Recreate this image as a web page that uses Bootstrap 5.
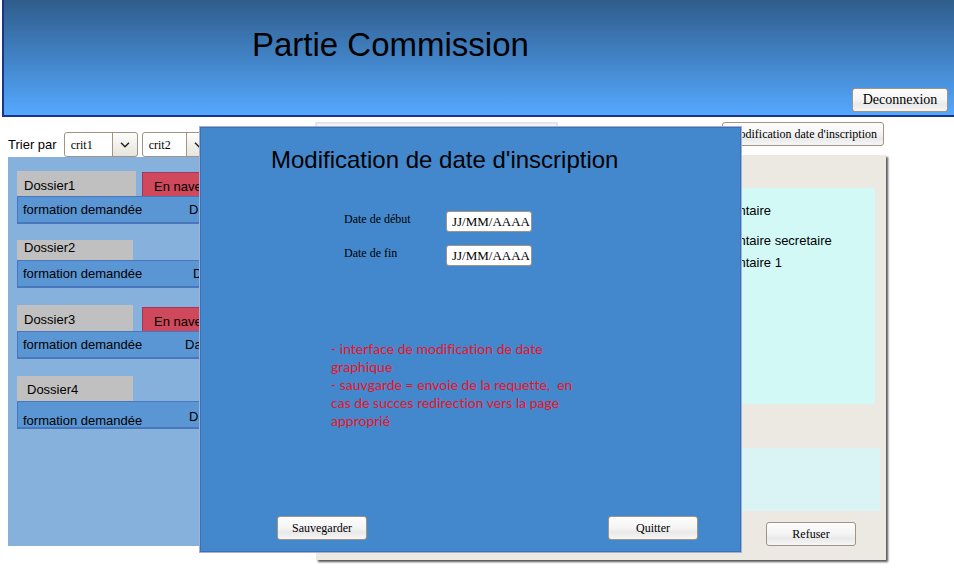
<!DOCTYPE html>
<html lang="fr">
<head>
<meta charset="utf-8">
<meta name="viewport" content="width=device-width, initial-scale=1">
<title>Partie Commission</title>
<link href="https://cdn.jsdelivr.net/npm/bootstrap@5.3.0/dist/css/bootstrap.min.css" rel="stylesheet">
<style>
  body { font: 13px/18px "Liberation Sans", Arial, sans-serif; color: #000; background: #fff; }
  .top-banner { height: 117px; margin-left: 2px; padding: 0 6px 3px 248px; background: linear-gradient(#2f5d8c, #54a8ff); border-left: 2px solid #1a3487; border-bottom: 2px solid #1a3487; }
  .top-banner h1 { font-size: 33px; line-height: 40px; padding-top: 25px; }
  .soft-btn { height: 24px; min-width: 90px; padding: 0 6px; font: 12px/20px "Liberation Serif", "Times New Roman", serif; color: #000; background: linear-gradient(#fdfdfd, #f4f4f4 50%, #e9e9e9 70%, #f6f6f6); border: 1px solid #a09482; border-radius: 3px; }
  .soft-btn.logout { font-size: 14px; min-width: 96px; }
  .soft-btn.dates { min-width: 162px; }
  .side { flex: 0 0 308px; padding: 15px 0 0 8px; }
  .sort-select { width: 74px; height: 25px; padding: 0 24px 0 6px; font: 12px/20px "Liberation Serif", serif; color: #000; border: 1px solid #a09482; border-radius: 3px;
    background: url("data:image/svg+xml,%3Csvg xmlns='http://www.w3.org/2000/svg' width='10' height='6'%3E%3Cpath d='M1 .8 5 4.8 9 .8' fill='none' stroke='%23222' stroke-width='1.5'/%3E%3C/svg%3E") no-repeat right 7px center / 10px 6px,
      linear-gradient(#a09482, #a09482) no-repeat right 24px top / 1px 100%,
      linear-gradient(#fdfdfc, #e6e4dc) no-repeat right top / 24px 100%, #fff; }
  .sort-select.second { width: 70px; padding-right: 22px; }
  .sort-label { padding-right: 3px; }
  .dossier-list { height: 389px; padding: 14px 0 0 9px; gap: 17px; background: #86b1dd; }
  .dossier-name { width: 116px; height: 26px; padding-left: 7px; background: #c0c0c0; }
  .dossier-name.wide { width: 119px; height: 25px; }
  .dossier-name.short { height: 20px; margin-top: -1px; padding-bottom: 4px; }
  .dossier-name.last { height: 25px; padding: 3px 0 0 10px; }
  .shuttle { height: 24px; width: 100px; margin-left: 9px; padding: 4px 0 0 11px; background: #cf485b; border: 1px solid #a3365f; border-bottom: 0; }
  .wide + .shuttle { margin-left: 6px; }
  .dossier-row { height: 28px; padding-left: 5px; background: #5a96d3; border: 2px solid #4877bc; border-width: 1px 2px 2px 1px; }
  .dossier-row .course { flex: 0 0 162px; }
  .dossier-row.low { line-height: 13px; }
  .detail { padding: 5px 67px 16px 7px; }
  .detail-bar { padding-right: 3px; }
  .detail-title { width: 243px; height: 24px; background: #f3f4f6; border: 2px solid #e1e4ec; }
  .detail-panel { height: 405px; margin: 9px 1px 0; padding: 33px 6px 0; background: #ece9e2; box-shadow: 2px 2px 2px #555; }
  .comments { width: 214px; height: 216px; margin-right: 5px; padding: 14px 0 0 32px; background: #d2f9f6; }
  .reply { width: 220px; height: 63px; margin: 44px 0 11px; background: #daf4f5; }
  .refuse { padding-right: 24px; }
  .date-dialog { top: 9px; left: 199px; right: 212px; height: 427px; padding: 19px 43px 12px 71px; background: #4388cd; border: 1px solid #a4b0d4; box-shadow: inset 0 0 0 1px #3c70b8; z-index: 5; }
  .date-dialog h2 { font-size: 24px; line-height: 28px; margin-bottom: 37px; }
  .date-field { gap: 14px; margin: 0 0 13px 73px; }
  .date-field label { width: 88px; font: 12px/16px "Liberation Serif", serif; }
  .date-field input { width: 86px; height: 21px; padding: 0 0 0 5px; font: 13px/18px "Liberation Serif", serif; color: #000; border: 1px solid #a09482; border-radius: 3px; background: #fff; }
  .note { margin: 61px 0 0 60px; font: 14px/18px Lato, sans-serif; font-variant-ligatures: none; color: #ec1226; }
  .dialog-actions { padding-left: 6px; }
</style>
<script src="https://cdn.jsdelivr.net/npm/bootstrap@5.3.0/dist/js/bootstrap.bundle.min.js"></script>
</head>
<body>
<header class="top-banner d-flex justify-content-between">
  <h1 class="fw-normal m-0">Partie Commission</h1>
  <button type="button" class="soft-btn logout align-self-end">Deconnexion</button>
</header>
<main class="position-relative d-flex">
  <section class="side">
    <div class="d-flex align-items-center gap-1">
      <label for="crit-a" class="sort-label text-nowrap">Trier par</label>
      <select id="crit-a" class="form-select sort-select flex-shrink-0"><option>crit1</option></select>
      <select id="crit-b" aria-label="Second critère" class="form-select sort-select second flex-shrink-0"><option>crit2</option></select>
    </div>
    <div class="dossier-list d-flex flex-column">
      <article>
        <div class="d-flex align-items-end">
          <div class="dossier-name wide d-flex align-items-center pt-1">Dossier1</div>
          <div class="shuttle d-flex align-items-center">En navette</div>
        </div>
        <div class="dossier-row d-flex align-items-center"><span class="course">formation demandée</span><span class="ms-1">Date</span></div>
      </article>
      <article>
        <div class="dossier-name short d-flex align-items-center">Dossier2</div>
        <div class="dossier-row d-flex align-items-center"><span class="course">formation demandée</span><span class="ms-2">Date</span></div>
      </article>
      <article>
        <div class="d-flex align-items-end">
          <div class="dossier-name d-flex align-items-center pt-1">Dossier3</div>
          <div class="shuttle d-flex align-items-center">En navette</div>
        </div>
        <div class="dossier-row d-flex align-items-center"><span class="course">formation demandée</span><span>Date</span></div>
      </article>
      <article>
        <div class="dossier-name last d-flex align-items-center">Dossier4</div>
        <div class="dossier-row low d-flex align-items-end"><span class="course">formation demandée</span><span class="ms-1 pb-1">Date</span></div>
      </article>
    </div>
  </section>
  <section class="detail flex-grow-1">
    <div class="detail-bar d-flex justify-content-between">
      <div class="detail-title"></div>
      <button type="button" class="soft-btn dates">Modification date d'inscription</button>
    </div>
    <div class="detail-panel d-flex flex-column align-items-end">
      <div class="comments">
        <p class="mb-2 pb-1">Commentaire</p>
        <p class="mb-1">Commentaire secretaire</p>
        <p class="m-0">Commentaire 1</p>
      </div>
      <div class="reply"></div>
      <div class="refuse"><button type="button" class="soft-btn">Refuser</button></div>
    </div>
  </section>
  <div class="date-dialog position-absolute d-flex flex-column" role="dialog" aria-labelledby="dialog-title">
    <h2 id="dialog-title" class="fw-normal mt-0">Modification de date d'inscription</h2>
    <div class="date-field d-flex"><label for="date-start">Date de début</label><input id="date-start" type="text" value="JJ/MM/AAAA"></div>
    <div class="date-field d-flex"><label for="date-end">Date de fin</label><input id="date-end" type="text" value="JJ/MM/AAAA"></div>
    <p class="note">- interface de modification de date<br>graphique<br>- sauvgarde = envoie de la requette,&nbsp; en<br>cas de succes redirection vers la page<br>approprié</p>
    <div class="dialog-actions d-flex justify-content-between mt-auto">
      <button type="button" class="soft-btn">Sauvegarder</button>
      <button type="button" class="soft-btn">Quitter</button>
    </div>
  </div>
</main>
</body>
</html>
